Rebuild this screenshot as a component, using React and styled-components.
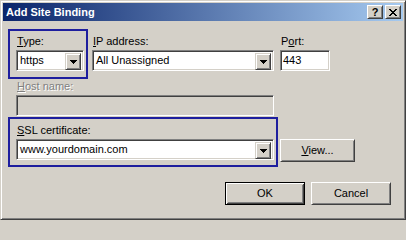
import React from "react";
import styled, { createGlobalStyle, css } from "styled-components";

const GlobalStyle = createGlobalStyle`
  html, body { margin: 0; padding: 0; background: #d4d0c8; }
  body { font-family: "Liberation Sans", Arial, sans-serif; font-size: 11px; color: #000; }
  * { box-sizing: border-box; }
`;

const raised = css`
  border: 1px solid;
  border-color: #fff #404040 #404040 #fff;
  box-shadow: inset 1px 1px #d4d0c8, inset -1px -1px #808080;
`;

const sunken = css`
  border: 1px solid;
  border-color: #808080 #fff #fff #808080;
  box-shadow: inset 1px 1px #404040, inset -1px -1px #d4d0c8;
`;

const Window = styled.div`
  width: 406px;
  height: 220px;
  background: #d4d0c8;
  border: 1px solid;
  border-color: #d4d0c8 #404040 #404040 #d4d0c8;
  box-shadow: inset 1px 1px #fff, inset -1px -1px #808080;
  padding: 2px;
  display: flex;
  flex-direction: column;
`;

const TitleBar = styled.div`
  height: 18px;
  flex: none;
  display: flex;
  align-items: center;
  padding: 0 2px 0 3px;
  background: linear-gradient(to right, #0a246a, #a6caf0);
  color: #fff;
  font-weight: bold;
  font-size: 11px;
  line-height: 16px;
`;

const TitleText = styled.div`
  flex: 1;
  white-space: nowrap;
`;

const CaptionButtons = styled.div`
  display: flex;
  gap: 2px;
`;

const CaptionButton = styled.div`
  width: 16px;
  height: 14px;
  background: #d4d0c8;
  ${raised};
  display: flex;
  align-items: center;
  justify-content: center;
  color: #000;
  font-weight: bold;
  font-size: 11px;
  line-height: 12px;
`;

const Body = styled.div`
  display: flex;
  flex-direction: column;
  padding: 8px 0 0 5px;
`;

const Row = styled.div`
  display: flex;
  align-items: flex-start;
  margin-top: ${(p) => p.$top || 0}px;
  margin-left: ${(p) => p.$left || 0}px;
  justify-content: ${(p) => (p.$end ? "flex-end" : "flex-start")};
  gap: ${(p) => p.$gap || 0}px;
  padding-right: ${(p) => p.$right || 0}px;
`;

const Highlight = styled.div`
  border: 2px solid #1e1e9e;
  padding: ${(p) => p.$pad};
  display: flex;
  flex-direction: column;
  gap: 2px;
`;

const Field = styled.div`
  display: flex;
  flex-direction: column;
  gap: 2px;
  margin-left: ${(p) => p.$left || 0}px;
  padding-top: ${(p) => p.$top || 0}px;
`;

const Label = styled.div`
  height: 13px;
  line-height: 13px;
  padding-left: 1px;
  white-space: nowrap;
  color: ${(p) => (p.$disabled ? "#808080" : "#000")};
  text-shadow: ${(p) => (p.$disabled ? "1px 1px 0 #fff" : "none")};
`;

const Key = styled.span`
  text-decoration: underline;
  text-underline-offset: 1px;
`;

const Combo = styled.div`
  width: ${(p) => p.$w}px;
  height: 21px;
  background: #fff;
  ${sunken};
  padding: 1px;
  display: flex;
  align-items: stretch;
`;

const ComboValue = styled.div`
  flex: 1;
  line-height: 17px;
  padding-left: 2px;
  white-space: nowrap;
  overflow: hidden;
`;

const ComboArrow = styled.div`
  width: 16px;
  height: 17px;
  margin-top: 1px;
  margin-right: 1px;
  background: #d4d0c8;
  border: 1px solid;
  border-color: #d4d0c8 #404040 #404040 #d4d0c8;
  box-shadow: inset 1px 1px #fff, inset -1px -1px #808080;
  display: flex;
  align-items: center;
  justify-content: center;
`;

const TextBox = styled.div`
  width: ${(p) => p.$w}px;
  height: 21px;
  background: ${(p) => (p.$disabled ? "#d4d0c8" : "#fff")};
  ${sunken};
  padding-left: 2px;
  line-height: 19px;
  white-space: nowrap;
`;

const PushButton = styled.div`
  width: ${(p) => p.$w}px;
  height: 23px;
  margin-left: ${(p) => p.$left || 0}px;
  margin-top: ${(p) => p.$top || 0}px;
  background: #d4d0c8;
  display: flex;
  align-items: center;
  justify-content: center;
  line-height: 13px;
  ${(p) =>
    p.$default
      ? css`
          border: 1px solid #000;
          box-shadow: inset 1px 1px #fff, inset -1px -1px #404040,
            inset 2px 2px #d4d0c8, inset -2px -2px #808080;
        `
      : raised};
`;

const Arrow = () => (
  <svg width="7" height="4" viewBox="0 0 7 4">
    <path d="M0 0h7v1h-1v1h-1v1h-1v1h-1v-1h-1v-1h-1v-1h-1z" fill="#000" />
  </svg>
);

const closeMap = ["11000011", "01100110", "00111100", "00011000", "00111100", "01100110", "11000011"];

const CloseGlyph = () => (
  <svg width="8" height="7" viewBox="0 0 8 7" shapeRendering="crispEdges">
    {closeMap.flatMap((row, y) =>
      row.split("").map((c, x) =>
        c === "1" ? <rect key={`${x}-${y}`} x={x} y={y} width="1" height="1" fill="#000" /> : null
      )
    )}
  </svg>
);

const ComboBox = ({ w, value }) => (
  <Combo $w={w}>
    <ComboValue>{value}</ComboValue>
    <ComboArrow>
      <Arrow />
    </ComboArrow>
  </Combo>
);

export default function App() {
  return (
    <>
      <GlobalStyle />
      <Window>
        <TitleBar>
          <TitleText>Add Site Binding</TitleText>
          <CaptionButtons>
            <CaptionButton>?</CaptionButton>
            <CaptionButton>
              <CloseGlyph />
            </CaptionButton>
          </CaptionButtons>
        </TitleBar>
        <Body>
          <Row>
            <Highlight $pad="4px 2px 6px 6px">
              <Label>
                <Key>T</Key>ype:
              </Label>
              <ComboBox w={68} value="https" />
            </Highlight>
            <Field $left={4} $top={6}>
              <Label>
                <Key>I</Key>P address:
              </Label>
              <ComboBox w={182} value="All Unassigned" />
            </Field>
            <Field $left={6} $top={6}>
              <Label>
                P<Key>o</Key>rt:
              </Label>
              <TextBox $w={50}>443</TextBox>
            </Field>
          </Row>
          <Row $left={8} $top={1}>
            <Field>
              <Label $disabled>
                <Key>H</Key>ost name:
              </Label>
              <TextBox $w={258} $disabled />
            </Field>
          </Row>
          <Row $top={1}>
            <Highlight $pad="5px 2px 5px 6px">
              <Label>
                <Key>S</Key>SL certificate:
              </Label>
              <ComboBox w={258} value="www.yourdomain.com" />
            </Highlight>
            <PushButton $w={75} $left={2} $top={22}>
              <span>
                <Key>V</Key>iew...
              </span>
            </PushButton>
          </Row>
          <Row $top={15} $end $gap={6} $right={12}>
            <PushButton $w={80} $default>
              OK
            </PushButton>
            <PushButton $w={80}>Cancel</PushButton>
          </Row>
        </Body>
      </Window>
    </>
  );
}
